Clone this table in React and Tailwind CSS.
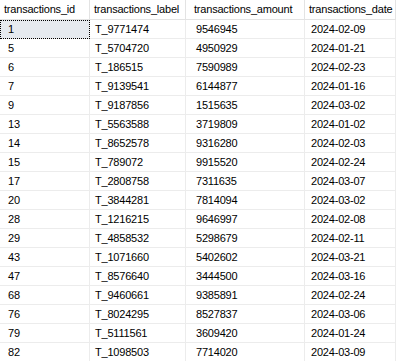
import React from "react";

const rows = [
  ["1", "T_9771474", "9546945", "2024-02-09"],
  ["5", "T_5704720", "4950929", "2024-01-21"],
  ["6", "T_186515", "7590989", "2024-02-23"],
  ["7", "T_9139541", "6144877", "2024-01-16"],
  ["9", "T_9187856", "1515635", "2024-03-02"],
  ["13", "T_5563588", "3719809", "2024-01-02"],
  ["14", "T_8652578", "9316280", "2024-02-03"],
  ["15", "T_789072", "9915520", "2024-02-24"],
  ["17", "T_2808758", "7311635", "2024-03-07"],
  ["20", "T_3844281", "7814094", "2024-03-02"],
  ["28", "T_1216215", "9646997", "2024-02-08"],
  ["29", "T_4858532", "5298679", "2024-02-11"],
  ["43", "T_1071660", "5402602", "2024-03-21"],
  ["47", "T_8576640", "3444500", "2024-03-16"],
  ["68", "T_9460661", "9385891", "2024-02-24"],
  ["76", "T_8024295", "8527837", "2024-03-06"],
  ["79", "T_5111561", "3609420", "2024-01-24"],
  ["82", "T_1098503", "7714020", "2024-03-09"],
];

const headers = ["transactions_id", "transactions_label", "transactions_amount", "transactions_date"];
const headerPad = ["pl-[4px]", "pl-[4px]", "pl-[8px]", "pl-[4px]"];
const cellPad = ["pl-[8px]", "pl-[5px]", "pl-[10px]", "pl-[6px]"];

export default function App() {
  return (
    <div
      className="w-[396px] h-[361px] overflow-hidden bg-white text-[11px] tracking-[-0.2px] text-black"
      style={{ fontFamily: '"Liberation Sans", Arial, sans-serif' }}
    >
      <div className="grid grid-cols-[90px_96px_119px_1fr]">
        {headers.map((h, i) => (
          <div
            key={h}
            className={
              "h-[20px] flex items-center border-b border-r border-[#e3e3e3] bg-white whitespace-nowrap overflow-hidden " +
              headerPad[i]
            }
          >
            {h}
          </div>
        ))}
        {rows.map((r, ri) =>
          r.map((c, ci) => (
            <div
              key={ri + "-" + ci}
              className={
                "h-[19px] flex items-center border-b border-r border-[#ececec] whitespace-nowrap overflow-hidden " +
                cellPad[ci] +
                (ri === 0 && ci === 0
                  ? " bg-[#e6eaef] outline-1 outline-dotted outline-black -outline-offset-1"
                  : "")
              }
            >
              {c}
            </div>
          ))
        )}
      </div>
    </div>
  );
}
